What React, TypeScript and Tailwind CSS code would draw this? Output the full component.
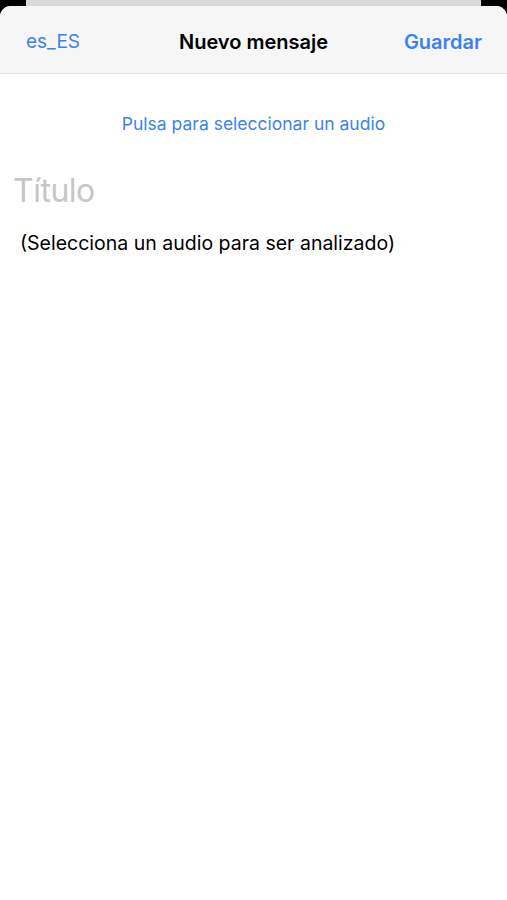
import React from "react";

export default function App() {
  return (
    <div className="w-[507px] h-[900px] bg-black overflow-hidden flex flex-col" style={{ fontFamily: "Inter, 'Noto Sans', sans-serif" }}>
      <div className="h-[6px] mx-[26px] bg-[#dadada] shrink-0" />
      <div className="flex-1 bg-white rounded-t-[11px] overflow-hidden flex flex-col">
        <div className="h-[68px] bg-[#f6f6f6] border-b border-[#e4e4e4] flex items-center justify-between pl-[26px] pr-[25px] pt-[5px] shrink-0 relative">
          <span className="text-[19px] text-[#3b82f0]">es_ES</span>
          <span className="absolute left-0 right-0 top-[5px] bottom-0 flex items-center justify-center text-[20px] font-semibold text-black pointer-events-none">Nuevo mensaje</span>
          <span className="text-[20px] font-semibold text-[#3b82f0]">Guardar</span>
        </div>
        <div className="flex flex-col">
          <div className="pt-[37px] text-center text-[17.5px] leading-[26px] text-[#3b82f0]">Pulsa para seleccionar un audio</div>
          <div className="pt-[38px] pl-[13px] text-[32px] text-[#c6c6c6] leading-none tracking-[-0.5px]">Título</div>
          <div className="pt-[22px] pl-[20px] text-[19.5px] leading-[28px] text-black">(Selecciona un audio para ser analizado)</div>
        </div>
      </div>
    </div>
  );
}
